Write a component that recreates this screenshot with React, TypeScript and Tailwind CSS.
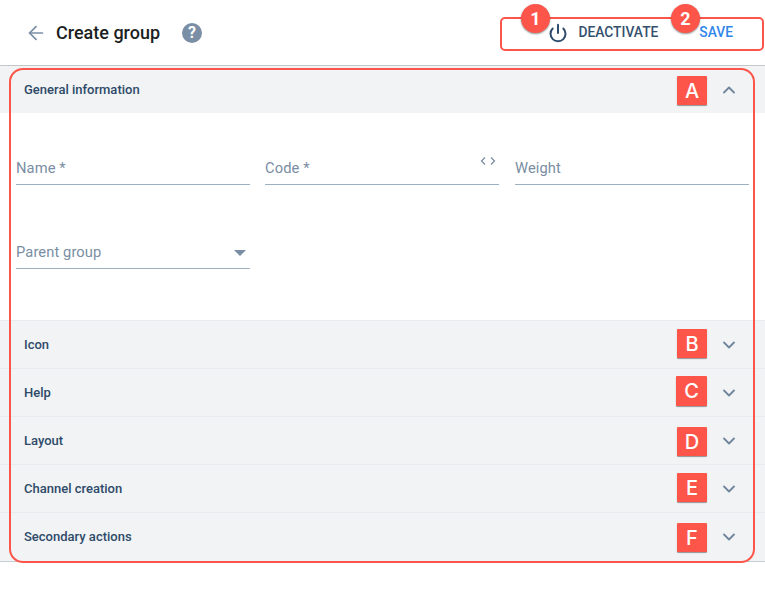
import { ArrowLeft, ChevronDown, ChevronUp, Power } from 'lucide-react';

const sections = [
  { title: 'Icon' },
  { title: 'Help' },
  { title: 'Layout' },
  { title: 'Channel creation' },
  { title: 'Secondary actions' },
];

// red annotation squares lying over the page
const squares = [
  { label: 'A', cls: 'top-[76px] left-[677px] w-[30px] h-[29px]' },
  { label: 'B', cls: 'top-[329px] left-[677px] w-[30px] h-[29px]' },
  { label: 'C', cls: 'top-[376px] left-[676px] w-[31px] h-[30px]' },
  { label: 'D', cls: 'top-[427px] left-[677px] w-[30px] h-[29px]' },
  { label: 'E', cls: 'top-[473px] left-[677px] w-[30px] h-[29px]' },
  { label: 'F', cls: 'top-[523px] left-[677px] w-[30px] h-[29px]' },
];

function Field({ label, className, children }: { label: string; className?: string; children?: React.ReactNode }) {
  return (
    <div className={`relative flex h-[34px] w-[234px] items-center justify-between border-b border-[#9db0c0] pt-[2px] text-[14.7px] text-[#7a8ea3] ${className ?? ''}`}>
      <span className="tracking-[0.1px]">{label}</span>
      {children}
    </div>
  );
}

function Marker({ n, cls }: { n: number; cls: string }) {
  return (
    <div className={`absolute top-[4px] flex h-[29px] w-[29px] items-center justify-center rounded-full bg-[#fd5549] text-[18px] font-bold text-white shadow-[0_1px_2px_rgba(0,0,0,0.45)] ${cls}`}>
      {n}
    </div>
  );
}

export default function App() {
  return (
    <div className="relative h-[608px] w-[765px] overflow-hidden bg-white font-['Roboto',sans-serif]">
      {/* Top bar */}
      <header className="flex h-[66px] items-center border-b border-[#c4c7ca] pl-[25px] pr-[32px] shadow-[0_1px_2px_rgba(0,0,0,0.18)]">
        <ArrowLeft className="h-[22px] w-[22px] text-[#7a8ea6]" strokeWidth={1.9} />
        <h1 className="ml-[9px] text-[18px] font-medium text-[#1c1f22]">Create group</h1>
        <div className="ml-[22px] flex h-5 w-5 items-center justify-center rounded-full bg-[#7a8ea6] text-[16px] font-bold text-white">?</div>
        <div className="ml-auto flex items-center text-[13.8px] font-medium">
          <Power className="h-5 w-5 text-[#2f4c6e]" strokeWidth={2.4} />
          <span className="ml-[10px] text-[#34506f]">DEACTIVATE</span>
          <span className="ml-[41px] text-[#2f86eb]">SAVE</span>
        </div>
      </header>

      {/* General information */}
      <div className="flex h-[47px] items-center justify-between bg-[#f1f3f5] pl-[24px] pr-[26px]">
        <span className="text-[13px] font-medium text-[#2e4a68]">General information</span>
        <ChevronUp className="h-5 w-5 text-[#71859b]" strokeWidth={2.2} />
      </div>
      <div className="h-[207px] px-[16px] pt-[38px]">
        <div className="flex">
          <Field label="Name *" />
          <Field label="Code *" className="ml-[15px]">
            <span className="absolute right-[3px] top-[5px] flex text-[#7a8ea3]">
              <svg width="16" height="10" viewBox="0 0 16 10" fill="none" stroke="currentColor" strokeWidth="1.3">
                <path d="M5 1.5 1.5 5 5 8.5M11 1.5 14.5 5 11 8.5" />
              </svg>
            </span>
          </Field>
          <Field label="Weight" className="ml-[16px]" />
        </div>
        <div className="mt-[50px] flex">
          <Field label="Parent group">
            <svg width="12" height="6" viewBox="0 0 12 6" className="mr-[4px] fill-[#7a8ea3]">
              <path d="M0 0h12L6 6z" />
            </svg>
          </Field>
        </div>
      </div>

      {/* Collapsed sections */}
      <div className="border-b border-[#c5cdd5] bg-[#f1f3f5] pb-px">
        {sections.map((s) => (
          <div key={s.title} className="flex h-[48px] items-center justify-between border-t border-[#e9ecef] pl-[24px] pr-[26px]">
            <span className="text-[13px] font-medium text-[#2e4a68]">{s.title}</span>
            <ChevronDown className="h-5 w-5 text-[#71859b]" strokeWidth={2.2} />
          </div>
        ))}
      </div>

      {/* Annotations */}
      <div className="absolute left-[500px] top-[17px] h-[34px] w-[264px] rounded-[5px] border-2 border-[#fd5549]" />
      <div className="absolute left-[9px] top-[68px] h-[495px] w-[746px] rounded-[14px] border-2 border-[#fd5549]" />
      <Marker n={1} cls="left-[521px]" />
      <Marker n={2} cls="left-[671px]" />
      {squares.map((b) => (
        <div key={b.label} className={`absolute flex items-center justify-center rounded-[1px] bg-[#fd5549] font-['Inter',sans-serif] text-[20px] font-medium text-white shadow-[0_1px_1px_rgba(0,0,0,0.4)] ${b.cls}`}>
          {b.label}
        </div>
      ))}
    </div>
  );
}
